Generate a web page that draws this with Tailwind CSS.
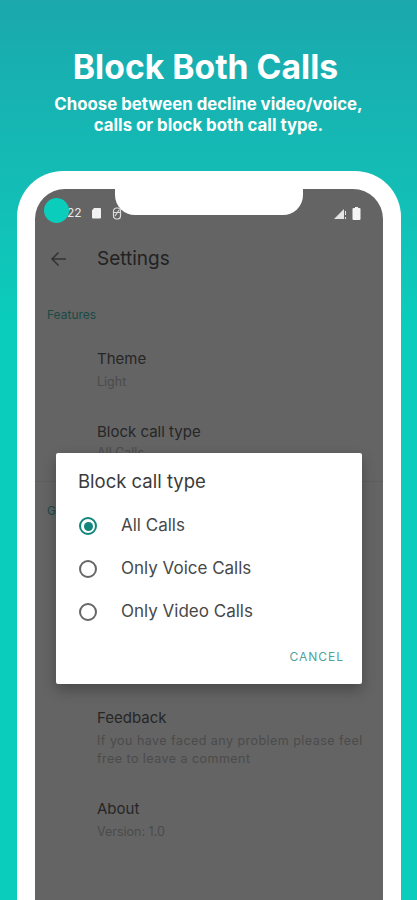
<!DOCTYPE html>
<html lang="en">
  <head>
    <meta charset="UTF-8" />
    <title>Block Both Calls</title>
    <script src="https://cdn.jsdelivr.net/npm/@tailwindcss/browser@4"></script>
  </head>
  <body class="w-[417px] h-[900px] overflow-hidden bg-gradient-to-b from-[#1aa8ad] from-0% to-[#0acdbc] to-[36%] font-['Inter',sans-serif]">

    <!-- Heading -->
    <div class="h-[171px] pt-[48px] text-center text-white">
      <h1 class="h-[38px] pr-[6px] text-[33.7px] leading-[38px] font-bold">Block Both Calls</h1>
      <p class="mt-[8px] text-[16.8px] leading-[21px] font-bold">Choose between decline video/voice,<br />calls or block both call type.</p>
    </div>

    <!-- Phone frame -->
    <div class="ml-[17px] w-[384px] h-[729px] rounded-t-[46px] bg-white px-[18px] pt-[18px]">
      <div class="relative h-[711px] overflow-hidden rounded-t-[30px] bg-[#646464]">

        <!-- Notch -->
        <div class="absolute left-[80px] top-0 h-[26px] w-[188px] rounded-b-[20px] bg-white"></div>
        <div class="absolute left-[9px] top-[9px] size-[25px] rounded-full bg-[#0acdbc]"></div>

        <!-- Status bar -->
        <div class="flex h-[44px] items-center pl-[32px] pr-[22px] pt-[4px] text-white">
          <span class="text-[12px] leading-none text-[#e8e8e8]">22</span>
          <svg class="ml-[9px]" width="11" height="12" viewBox="0 0 11 12"><path d="M3 1h6a1 1 0 0 1 1 1v8.500a1 1 0 0 1-1 1H2a1 1 0 0 1-1-1V3.500z" fill="#f2f2f2"/></svg>
          <svg class="ml-[10px]" width="10" height="13" viewBox="0 0 10 13" fill="none" stroke="#dcdcdc" stroke-width="1.200"><rect x="1.500" y="1" width="7" height="11" rx="3"/><path d="M1.500 5.500h7M7 3 3 9"/></svg>
          <svg class="ml-auto" width="13" height="12" viewBox="0 0 13 12"><path d="M0 12 10 2v10z" fill="#e4e4e4"/><path d="M11.500 4v4M11.500 10v2" stroke="#e4e4e4"/></svg>
          <svg class="ml-[5px]" width="9" height="13" viewBox="0 0 9 13"><path d="M3 0h3v1h1.500a1 1 0 0 1 1 1v10a1 1 0 0 1-1 1h-6a1 1 0 0 1-1-1V2a1 1 0 0 1 1-1H3z" fill="#f4f4f4"/></svg>
        </div>

        <!-- Toolbar -->
        <div class="flex h-[50px] items-center pl-[15px] pt-[2px]">
          <svg width="17" height="16" viewBox="0 0 17 16" fill="none" stroke="#333333" stroke-width="1.500"><path d="M16 8H2M8.500 1.500 2 8l6.500 6.500"/></svg>
          <span class="ml-[30px] text-[19px] leading-[24px] text-[#222222]">Settings</span>
        </div>

        <!-- Settings list -->
        <div class="pt-[24px]">
          <div class="pl-[12px] text-[12px] leading-[16px] text-[#1a4a47]">Features</div>
          <div class="mt-[26px] pl-[62px] text-[15px] leading-[20px] text-[#262626]">Theme</div>
          <div class="mt-[4px] pl-[62px] text-[12.5px] leading-[18px] text-[#4b4b4b]">Light</div>
          <div class="mt-[31px] pl-[62px] text-[15px] leading-[20px] text-[#262626]">Block call type</div>
          <div class="mt-[2px] pl-[62px] text-[12.5px] leading-[18px] text-[#4b4b4b]">All Calls</div>
          <div class="mt-[19px] border-t border-[#5e5e5e]"></div>
          <div class="mt-[21px] pl-[12px] text-[12px] leading-[16px] text-[#1a4a47]">General</div>

          <div class="mt-[189px] pl-[62px] text-[15px] leading-[20px] text-[#262626]">Feedback</div>
          <div class="mt-[4px] pl-[62px] text-[12.5px] tracking-[0.46px] whitespace-nowrap leading-[18px] text-[#4b4b4b]">If you have faced any problem please feel<br />free to leave a comment</div>
          <div class="mt-[31px] pl-[62px] text-[15px] leading-[20px] text-[#262626]">About</div>
          <div class="mt-[4px] pl-[62px] text-[12.5px] leading-[18px] text-[#4b4b4b]">Version: 1.0</div>
        </div>

        <!-- Dialog -->
        <div class="absolute left-[21px] top-[264px] h-[231px] w-[306px] rounded-[2px] bg-white pl-[22px] pr-[18px] pt-[16px] shadow-[0_6px_14px_rgba(0,0,0,0.28)]">
          <div class="text-[18.5px] leading-[24px] text-[#3a3a3a]">Block call type</div>
          <div class="mt-[21px] flex h-[43px] items-start gap-[24px] pl-[1px]">
            <span class="mt-[3px] flex size-[18px] items-center justify-center rounded-full border-2 border-[#12857d]"><span class="size-[9px] rounded-full bg-[#12857d]"></span></span>
            <span class="mt-[1px] text-[17px] leading-[20px] text-[#484848]">All Calls</span>
          </div>
          <div class="flex h-[43px] items-start gap-[24px] pl-[1px]">
            <span class="mt-[3px] size-[18px] rounded-full border-2 border-[#666666]"></span>
            <span class="mt-[1px] text-[17px] leading-[20px] text-[#484848]">Only Voice Calls</span>
          </div>
          <div class="flex h-[43px] items-start gap-[24px] pl-[1px]">
            <span class="mt-[3px] size-[18px] rounded-full border-2 border-[#666666]"></span>
            <span class="mt-[1px] text-[17px] leading-[20px] text-[#484848]">Only Video Calls</span>
          </div>
          <div class="mt-[6px] text-right text-[12px] leading-[16px] tracking-[1px] text-[#4fa39c]">CANCEL</div>
        </div>
      </div>
    </div>
  </body>
</html>
